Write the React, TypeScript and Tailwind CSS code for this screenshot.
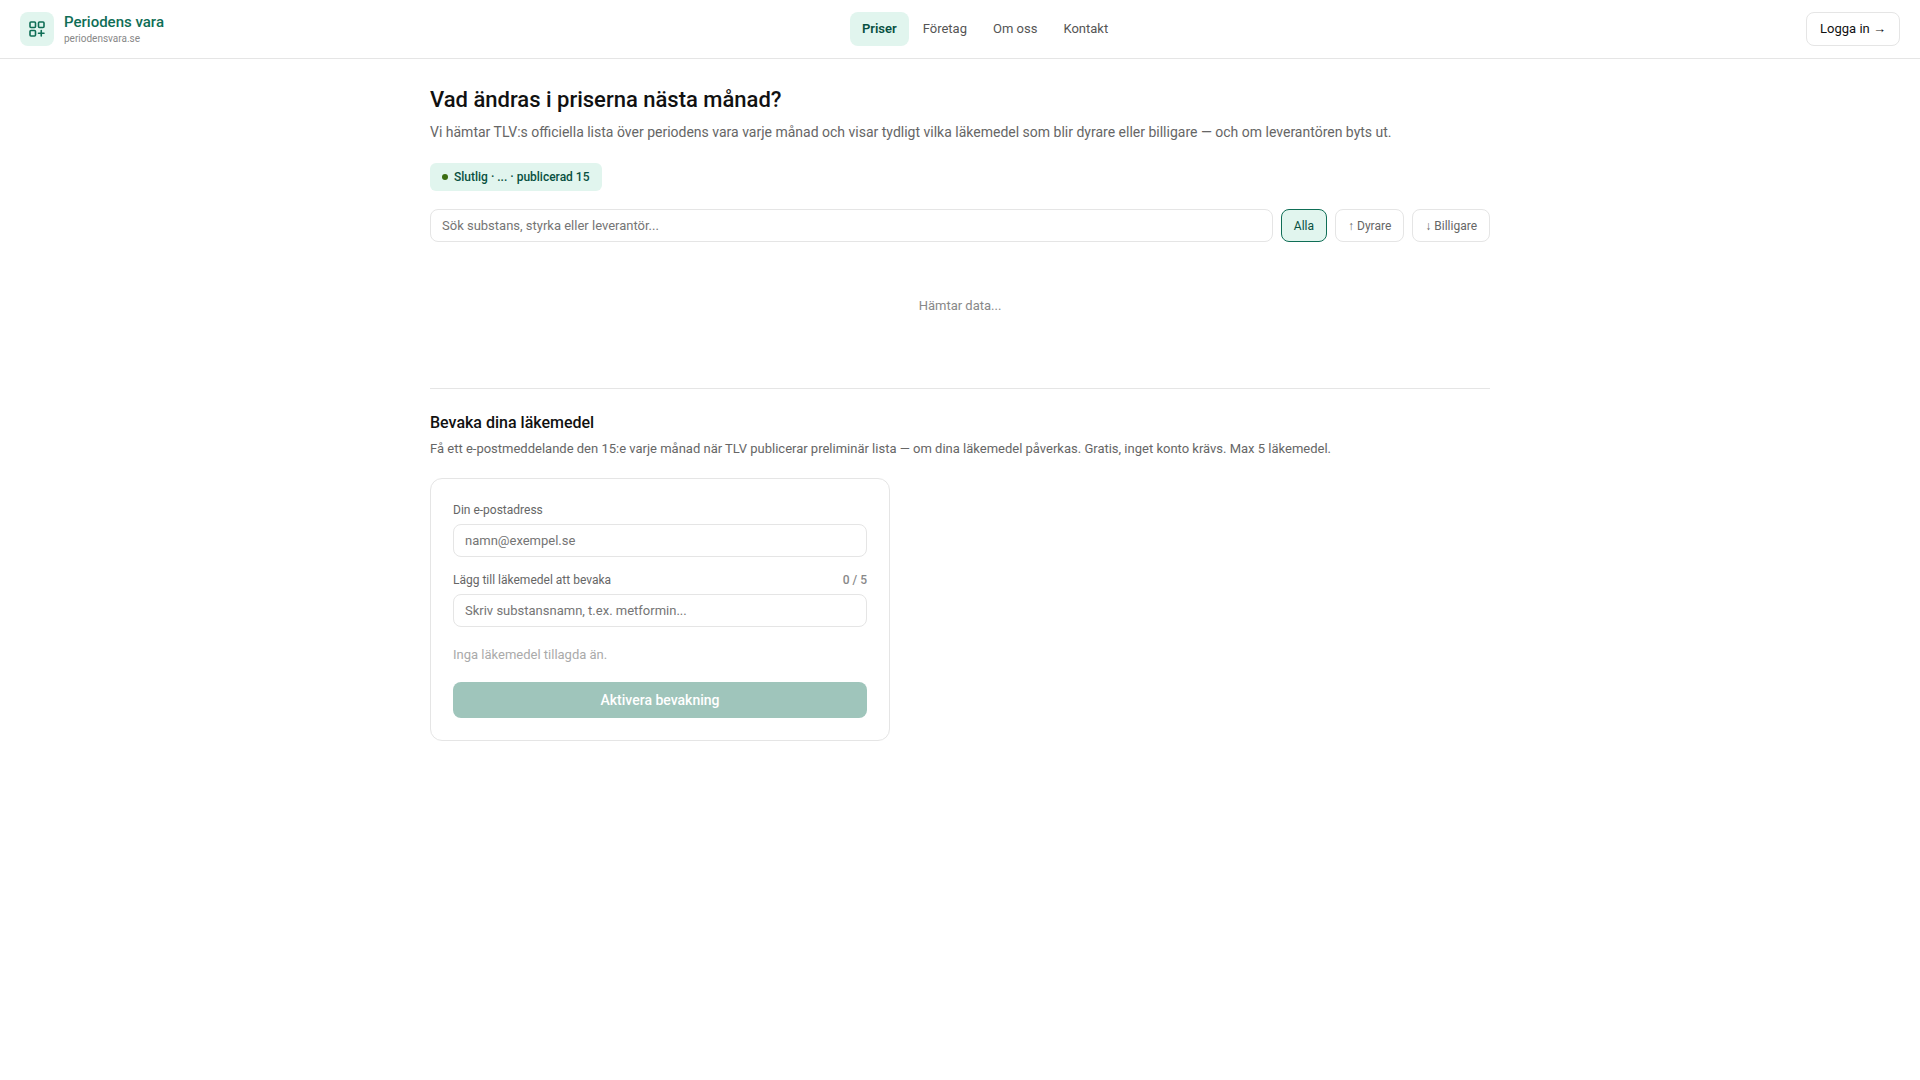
import React, { useState } from "react";

const navItems = ["Priser", "Företag", "Om oss", "Kontakt"];
const filters = ["Alla", "↑ Dyrare", "↓ Billigare"];

const inputClass =
  "w-full min-w-0 rounded-lg border border-[#e5e5e5] bg-white px-[11px] py-2 text-[13px] leading-[15px] text-[#111111] outline-none placeholder:text-[#757575] focus:border-[#0f6e56]";

function Logo() {
  return (
    <a href="#" className="flex items-center gap-2.5">
      <span className="flex size-[34px] items-center justify-center rounded-lg bg-[#e1f5ee]">
        <svg width="18" height="18" viewBox="0 0 18 18" fill="none" stroke="#0f6e56" strokeWidth="1.6" strokeLinecap="round" aria-hidden="true">
          <rect x="2" y="2" width="5.5" height="5.5" rx="1" />
          <rect x="10.5" y="2" width="5.5" height="5.5" rx="1" />
          <rect x="2" y="10.5" width="5.5" height="5.5" rx="1" />
          <path d="M13.25 10.5v5.5M10.5 13.25h5.5" />
        </svg>
      </span>
      <span className="flex flex-col">
        <span className="text-[15px] leading-[18px] font-medium text-[#0f6e56]">Periodens vara</span>
        <span className="text-[10px] leading-[15px] text-[#888888]">periodensvara.se</span>
      </span>
    </a>
  );
}

function Header() {
  return (
    <header className="flex items-center justify-between border-b border-[#e5e5e5] bg-white px-5 py-3">
      <Logo />
      <nav className="flex gap-0.5">
        {navItems.map((item, i) => (
          <a
            key={item}
            href="#"
            className={
              i === 0
                ? "rounded-lg bg-[#e1f5ee] px-3 py-[7px] text-[13px] leading-5 font-semibold text-[#085041]"
                : "rounded-lg px-3 py-[7px] text-[13px] leading-5 text-[#555555]"
            }
          >
            {item}
          </a>
        ))}
      </nav>
      <button type="button" className="rounded-lg border border-[#e5e5e5] bg-white px-[13px] py-1.5 text-[13px] leading-5 text-[#111111]">
        Logga in →
      </button>
    </header>
  );
}

export default function App() {
  const [filter, setFilter] = useState("Alla");
  return (
    <div className="min-h-screen bg-white font-[Roboto,sans-serif] text-[#111111]">
      <Header />
      <main className="mx-auto max-w-[1100px] px-5 pt-6 pb-12">
        <h1 className="text-[22px] leading-[34px] font-medium">Vad ändras i priserna nästa månad?</h1>
        <p className="mt-1 text-sm leading-[22px] text-[#666666]">
          Vi hämtar TLV:s officiella lista över periodens vara varje månad och visar tydligt vilka läkemedel som blir dyrare eller billigare — och om leverantören byts ut.
        </p>

        <div className="mt-5 flex w-fit items-center gap-1.5 rounded-md bg-[#e1f5ee] px-3 py-1 text-xs leading-5 font-medium text-[#085041]">
          <span className="size-1.5 rounded-full bg-[#3b6d11]" />
          <span>Slutlig · ... · publicerad 15</span>
        </div>

        <div className="mt-[18px] flex gap-2">
          <input type="text" aria-label="Sök" placeholder="Sök substans, styrka eller leverantör..." className={inputClass} />
          {filters.map((name) => (
            <button
              key={name}
              type="button"
              aria-pressed={filter === name}
              onClick={() => setFilter(name)}
              className={
                filter === name
                  ? "shrink-0 rounded-lg border border-[#0f6e56] bg-[#e1f5ee] px-3 text-xs text-[#085041]"
                  : "shrink-0 rounded-lg border border-[#e5e5e5] bg-white px-3 text-xs text-[#666666]"
              }
            >
              {name}
            </button>
          ))}
        </div>

        <p className="px-5 py-[54px] text-center text-[13px] leading-5 text-[#888888]">Hämtar data...</p>

        <section className="mt-[18px] border-t border-[#e5e5e5] pt-[22px]">
          <h2 className="text-base leading-6 font-medium">Bevaka dina läkemedel</h2>
          <p className="mt-1 text-[13px] leading-5 text-[#666666]">
            Få ett e-postmeddelande den 15:e varje månad när TLV publicerar preliminär lista — om dina läkemedel påverkas. Gratis, inget konto krävs. Max 5 läkemedel.
          </p>

          <form className="mt-[19px] max-w-[460px] rounded-xl border border-[#e5e5e5] bg-white p-[22px]" onSubmit={(e) => e.preventDefault()}>
            <label htmlFor="email" className="block text-xs leading-[18px] text-[#666666]">
              Din e-postadress
            </label>
            <input id="email" type="email" placeholder="namn@exempel.se" className={"mt-[5px] block " + inputClass} />

            <div className="mt-3.5 flex items-center justify-between text-xs leading-[18px]">
              <label htmlFor="drug" className="text-[#666666]">
                Lägg till läkemedel att bevaka
              </label>
              <span className="font-medium text-[#888888]">0 / 5</span>
            </div>
            <input id="drug" type="text" placeholder="Skriv substansnamn, t.ex. metformin..." className={"mt-[5px] block " + inputClass} />

            <p className="mt-[18px] text-[13px] leading-5 text-[#aaaaaa]">Inga läkemedel tillagda än.</p>

            <button type="submit" disabled className="mt-[17px] w-full rounded-lg bg-[#9fc5bb] py-2 text-sm leading-5 font-medium text-white">
              Aktivera bevakning
            </button>
          </form>
        </section>
      </main>
    </div>
  );
}
